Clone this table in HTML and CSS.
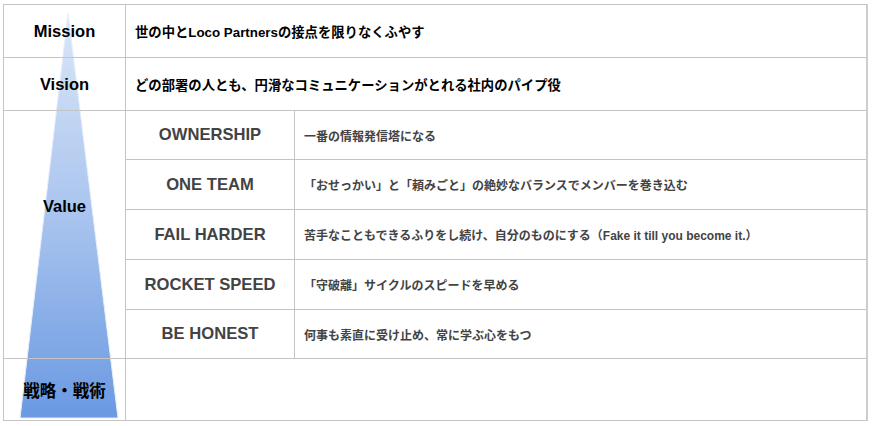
FILE: index.html
```html
<!DOCTYPE html>
<html lang="ja">
<head>
<meta charset="utf-8">
<title>Mission Vision Value</title>
<link rel="stylesheet" href="styles.css">
</head>
<body>
<div class="board">
  <svg class="pyramid" width="130" height="420" viewBox="0 0 130 420" aria-hidden="true">
    <defs>
      <linearGradient id="pg" x1="0" y1="0" x2="0" y2="1">
        <stop offset="0" stop-color="#dbe7f8"/>
        <stop offset="0.5" stop-color="#a9c4ee"/>
        <stop offset="1" stop-color="#6a99e2"/>
      </linearGradient>
    </defs>
    <polygon points="64,8 16,413 114,413" fill="url(#pg)" stroke="#e6eefa" stroke-width="1"/>
  </svg>

  <div class="cell head row-mission">Mission</div>
  <div class="cell text span2">世の中とLoco Partnersの接点を限りなくふやす</div>

  <div class="cell head">Vision</div>
  <div class="cell text span2">どの部署の人とも、円滑なコミュニケーションがとれる社内のパイプ役</div>

  <div class="cell head value-head">Value</div>
  <div class="cell vname">OWNERSHIP</div>
  <div class="cell vdesc">一番の情報発信塔になる</div>
  <div class="cell vname">ONE TEAM</div>
  <div class="cell vdesc">「おせっかい」と「頼みごと」の絶妙なバランスでメンバーを巻き込む</div>
  <div class="cell vname">FAIL HARDER</div>
  <div class="cell vdesc">苦手なこともできるふりをし続け、自分のものにする（Fake it till you become it.）</div>
  <div class="cell vname">ROCKET SPEED</div>
  <div class="cell vdesc">「守破離」サイクルのスピードを早める</div>
  <div class="cell vname">BE HONEST</div>
  <div class="cell vdesc">何事も素直に受け止め、常に学ぶ心をもつ</div>

  <div class="cell head">戦略・戦術</div>
  <div class="cell span2"></div>
</div>
</body>
</html>
```

FILE: styles.css
```css
html, body {
  margin: 0;
  padding: 0;
  background: #ffffff;
}

body {
  padding: 4px 0 0 3px;
  font-family: "Liberation Sans", "Noto Sans CJK JP", sans-serif;
  font-weight: bold;
}

.board {
  position: relative;
  z-index: 0;
  width: 865px;
  display: grid;
  grid-template-columns: 122px 169px 1fr;
  grid-template-rows: 53px 53px 49px 50px 50px 50px 49px 62px;
  border-top: 1px solid #c4c4c4;
  border-left: 1px solid #c4c4c4;
  border-right: 2px solid #cdcdcd;
  box-sizing: border-box;
}

.pyramid {
  position: absolute;
  left: 0;
  top: 0;
  z-index: -1;
}

.cell {
  border-right: 1px solid #c4c4c4;
  border-bottom: 1px solid #c4c4c4;
  display: flex;
  align-items: center;
  box-sizing: border-box;
  min-width: 0;
}

.span2 {
  grid-column: 2 / 4;
  border-right: none;
}

.head {
  justify-content: center;
  font-size: 16.5px;
  color: #000;
}

.value-head {
  grid-row: 3 / 8;
  align-items: flex-start;
  padding-top: 86px;
}

.text {
  padding-left: 9px;
  font-size: 13.33px;
  color: #000;
}

.vname {
  justify-content: center;
  font-size: 16.6px;
  color: #434343;
}

.vdesc {
  padding-left: 9px;
  font-size: 12px;
  color: #434343;
  border-right: none;
}
```
